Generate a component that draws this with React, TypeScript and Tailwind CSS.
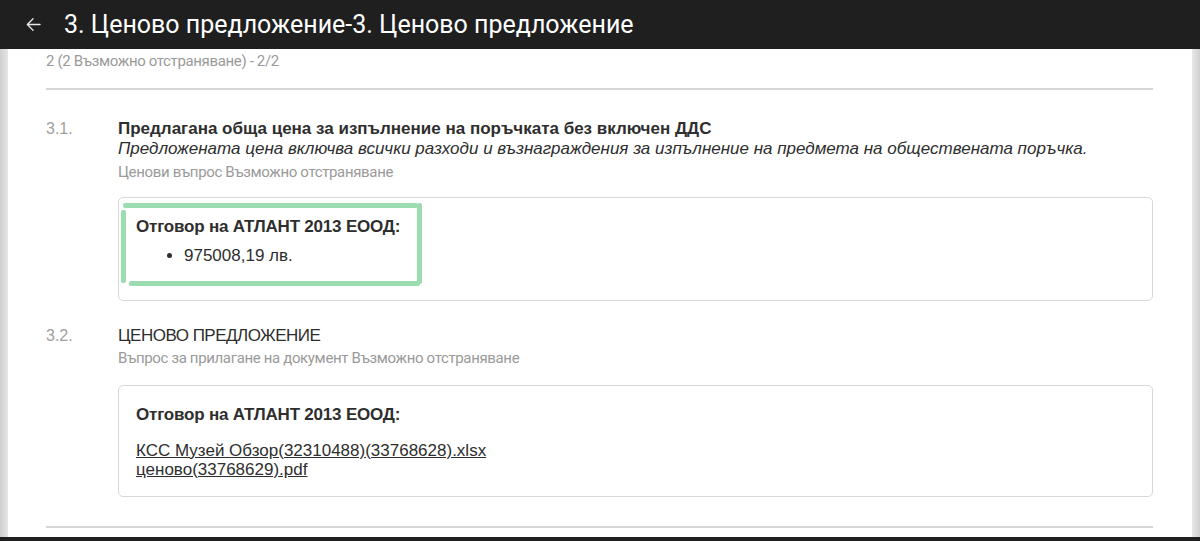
import React from "react";

const sans = "font-['Liberation_Sans','Arial',sans-serif]";
const narrow = "font-['Roboto','Liberation_Sans',sans-serif] tracking-[-0.35px]";

export default function App() {
  return (
    <div className="w-[1200px] h-[541px] overflow-hidden bg-[#dcdcdc] flex flex-col">
      <header className="h-[49px] shrink-0 bg-[#1f1f1f] flex items-center text-white">
        <svg className="ml-[26px] w-[15px] h-[15px]" viewBox="0 0 16 16" fill="none" stroke="#e8e8e8" strokeWidth="1.4" strokeLinecap="round" strokeLinejoin="round">
          <path d="M15 8H1.5M7.5 1.8L1.4 8l6.1 6.2" />
        </svg>
        <h1 className="ml-[23px] text-[25px] font-['Roboto',sans-serif] leading-none">
          3. Ценово предложение-3. Ценово предложение
        </h1>
      </header>
      <div className="flex-1 flex min-h-0">
        <div className="w-[8px] bg-gradient-to-r from-[#cfcfcf] to-[#e6e6e6]" />
        <main className="flex-1 bg-white pl-[38px] pr-[39px] min-h-0 overflow-hidden">
          <div className={`${narrow} text-[15px] text-[#9a9a9a] pt-[3px] leading-[18px]`}>
            2 (2 Възможно отстраняване) - 2/2
          </div>
          <div className="mt-[18px] h-[2px] bg-[#d6d6d6]" />

          <section className="mt-[29px] flex">
            <div className={`${sans} w-[72px] text-[16px] text-[#a0a0a0] leading-[20px]`}>3.1.</div>
            <div className="flex-1">
              <div className={`${sans} text-[17px] font-bold text-[#2e2e2e] leading-[20px]`}>
                Предлагана обща цена за изпълнение на поръчката без включен ДДС
              </div>
              <div className={`${sans} text-[17px] italic text-[#2e2e2e] leading-[20px]`}>
                Предложената цена включва всички разходи и възнаграждения за изпълнение на предмета на обществената поръчка.
              </div>
              <div className={`${narrow} text-[15px] text-[#9a9a9a] mt-[4px] leading-[18px]`}>
                Ценови въпрос Възможно отстраняване
              </div>
              <div className="relative mt-[16px] h-[104px] border border-[#d8d8d8] rounded-[5px] px-[17px] pt-[19px]">
                <div className="absolute left-[4px] top-[5px] w-[295px] h-[5px] bg-[#9bdcb0] rounded-[2px]" />
                <div className="absolute left-[2px] top-[12px] w-[5px] h-[73px] bg-[#9bdcb0] rounded-[2px]" />
                <div className="absolute left-[298px] top-[5px] w-[5px] h-[81px] bg-[#9bdcb0] rounded-[2px]" />
                <div className="absolute left-[10px] top-[83px] w-[291px] h-[5px] bg-[#9bdcb0] rounded-[2px]" />
                <div className={`${sans} relative text-[17px] font-bold text-[#2e2e2e] leading-[20px] tracking-[-0.2px]`}>
                  Отговор на АТЛАНТ 2013 ЕООД:
                </div>
                <ul className={`${sans} relative mt-[9px] text-[17px] text-[#2e2e2e] leading-[20px] list-disc pl-[48px]`}>
                  <li>975008,19 лв.</li>
                </ul>
              </div>
            </div>
          </section>

          <section className="mt-[25px] flex">
            <div className={`${sans} w-[72px] text-[16px] text-[#a0a0a0] leading-[20px]`}>3.2.</div>
            <div className="flex-1">
              <div className={`${sans} text-[17px] text-[#2e2e2e] leading-[20px] tracking-[-0.5px]`}>
                ЦЕНОВО ПРЕДЛОЖЕНИЕ
              </div>
              <div className={`${narrow} text-[15px] text-[#9a9a9a] mt-[3px] leading-[18px]`}>
                Въпрос за прилагане на документ Възможно отстраняване
              </div>
              <div className="mt-[18px] h-[112px] border border-[#d8d8d8] rounded-[5px] px-[17px] pt-[19px]">
                <div className={`${sans} text-[17px] font-bold text-[#2e2e2e] leading-[20px] tracking-[-0.2px]`}>
                  Отговор на АТЛАНТ 2013 ЕООД:
                </div>
                <div className={`${sans} mt-[16px] text-[17px] text-[#2e2e2e] leading-[19px] flex flex-col items-start`}>
                  <a className="underline">КСС Музей Обзор(32310488)(33768628).xlsx</a>
                  <a className="underline">ценово(33768629).pdf</a>
                </div>
              </div>
            </div>
          </section>

          <div className="mt-[29px] h-[2px] bg-[#d6d6d6]" />
        </main>
        <div className="w-[8px] bg-gradient-to-r from-[#e8e8e8] to-[#d0d0d0]" />
      </div>
      <div className="h-[4px] shrink-0 bg-[#1f1f1f]" />
    </div>
  );
}
